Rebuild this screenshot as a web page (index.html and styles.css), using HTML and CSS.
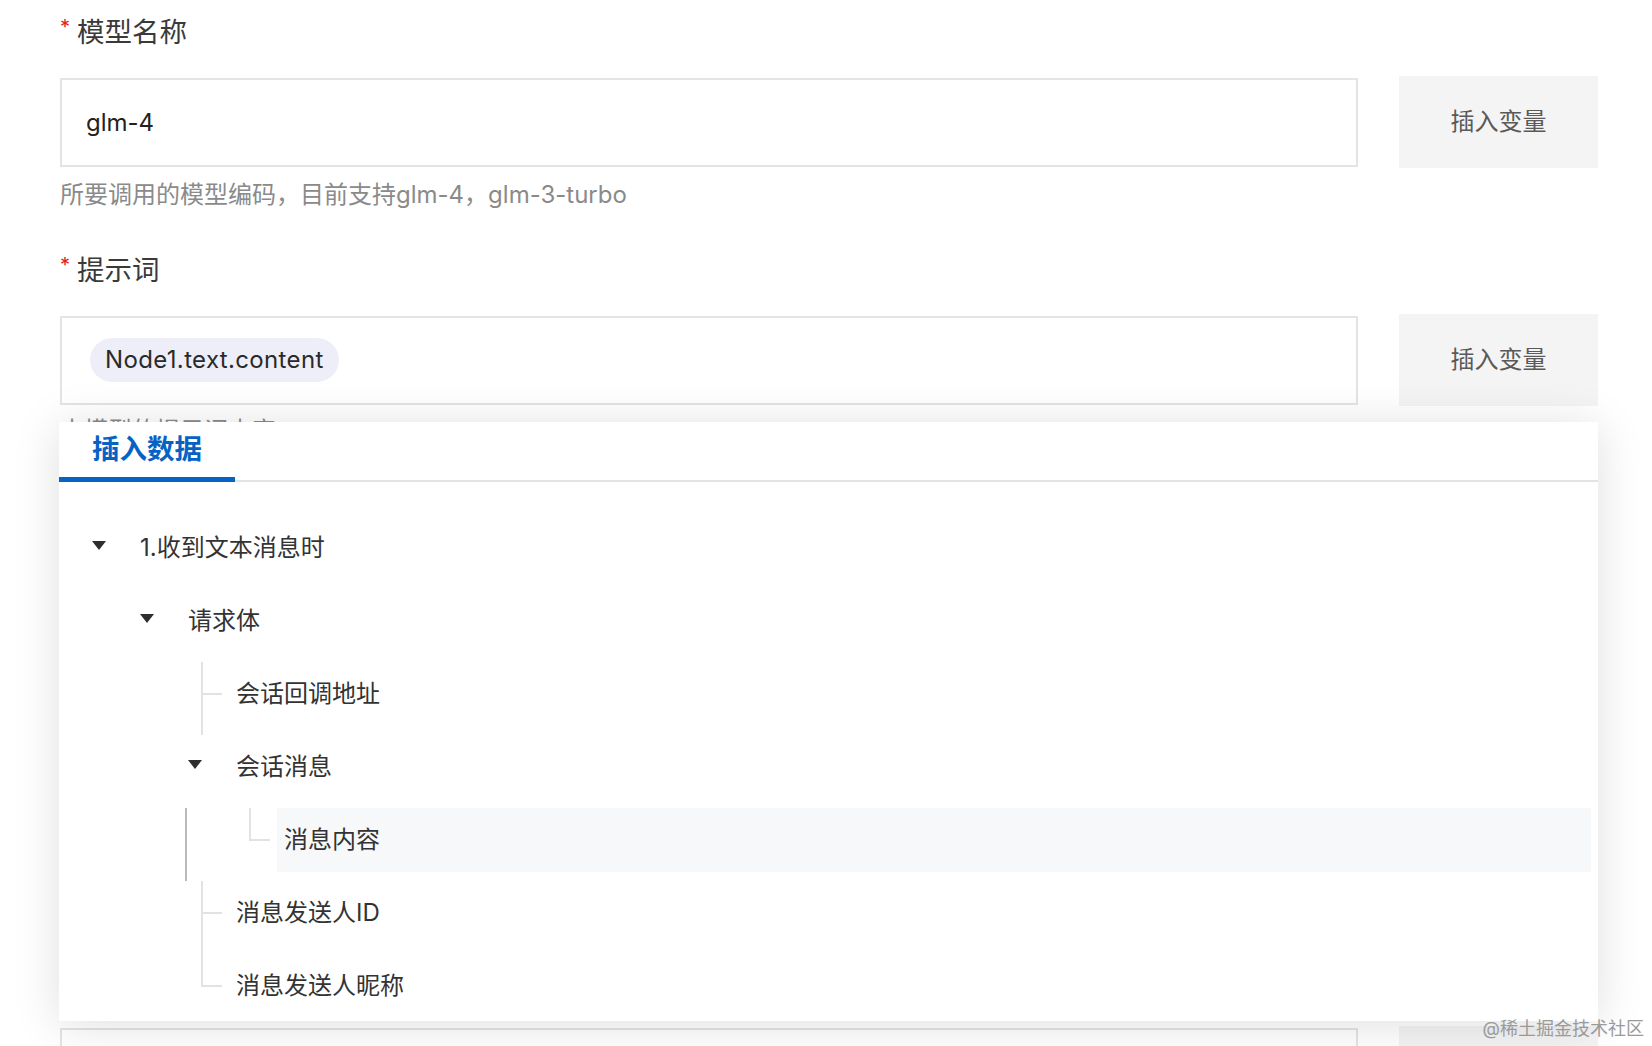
FILE: index.html
```html
<!DOCTYPE html>
<html lang="zh-CN">
<head>
<meta charset="utf-8">
<title>插入数据</title>
<link rel="stylesheet" href="styles.css">
</head>
<body>
<div class="page">
  <div class="field">
    <div class="label"><span class="req">*</span>模型名称</div>
    <div class="row">
      <div class="input"><span class="value">glm-4</span></div>
      <button class="btn">插入变量</button>
    </div>
    <div class="help">所要调用的模型编码，目前支持glm-4，glm-3-turbo</div>
  </div>

  <div class="field field-prompt">
    <div class="label"><span class="req">*</span>提示词</div>
    <div class="anchor">
      <div class="row">
        <div class="input"><span class="chip">Node1.text.content</span></div>
        <button class="btn">插入变量</button>
      </div>
      <div class="help help-covered">大模型的提示词内容</div>

      <div class="popup">
        <div class="tabs">
          <div class="tab">插入数据</div>
        </div>
        <div class="tree">
          <div class="node">
            <span class="switch"><i class="caret"></i></span>
            <span class="title">1.收到文本消息时</span>
          </div>
          <div class="node">
            <span class="indent"></span>
            <span class="switch"><i class="caret"></i></span>
            <span class="title">请求体</span>
          </div>
          <div class="node">
            <span class="indent"></span><span class="indent"></span>
            <span class="switch leaf"></span>
            <span class="title">会话回调地址</span>
          </div>
          <div class="node">
            <span class="indent"></span><span class="indent"></span>
            <span class="switch"><i class="caret"></i></span>
            <span class="title">会话消息</span>
          </div>
          <div class="node">
            <span class="indent"></span><span class="indent guide-dark"></span><span class="indent"></span>
            <span class="switch leaf last"></span>
            <span class="title selected">消息内容</span>
          </div>
          <div class="node">
            <span class="indent"></span><span class="indent"></span>
            <span class="switch leaf"></span>
            <span class="title">消息发送人ID</span>
          </div>
          <div class="node">
            <span class="indent"></span><span class="indent"></span>
            <span class="switch leaf last"></span>
            <span class="title">消息发送人昵称</span>
          </div>
        </div>
      </div>
    </div>
  </div>

  <div class="field field-next">
    <div class="row">
      <div class="input"></div>
      <button class="btn">插入变量</button>
    </div>
  </div>

  <div class="watermark">@稀土掘金技术社区</div>
</div>
</body>
</html>
```

FILE: styles.css
```css
html, body {
  margin: 0;
  padding: 0;
  height: 1046px;
  overflow: hidden;
  background: #ffffff;
}

.page {
  position: relative;
  height: 1046px;
  overflow: hidden;
  padding: 12px 54px 0 60px;
  box-sizing: border-box;
  font-family: Inter, "Noto Sans CJK SC", sans-serif;
  color: #333333;
}

.label {
  height: 40px;
  line-height: 40px;
  font-size: 27.5px;
  color: #3a3a3a;
  margin-bottom: 24px;
  display: flex;
  align-items: center;
}

.req {
  color: #e0201b;
  font-size: 20px;
  margin-right: 7px;
  align-self: flex-start;
  line-height: 30px;
}

.row {
  display: flex;
  align-items: center;
  gap: 41px;
  height: 92px;
}

.input {
  flex: 1;
  height: 89px;
  box-sizing: border-box;
  border: 2px solid #e4e4e4;
  background: #ffffff;
  display: flex;
  align-items: center;
  padding: 0 24px;
  font-size: 24px;
  color: #222222;
}

.btn {
  width: 199px;
  height: 92px;
  border: none;
  background: #f4f4f5;
  font-family: Inter, "Noto Sans CJK SC", sans-serif;
  font-size: 24px;
  line-height: 30px;
  color: #5a5a5a;
  padding: 0;
}

.chip {
  margin-left: 4px;
  height: 44px;
  line-height: 44px;
  padding: 0 15px;
  border-radius: 22px;
  background: #eeeef9;
  color: #2a2a2a;
  font-size: 24px;
  letter-spacing: 0.35px;
}

.help {
  margin-top: 10px;
  height: 34px;
  line-height: 34px;
  font-size: 24px;
  color: #8a8a8a;
}

.help-covered {
  margin-top: 8px;
}

.field-prompt {
  margin-top: 38px;
}

.field-next {
  margin-top: 578px;
}

.anchor {
  position: relative;
}

.popup {
  position: absolute;
  top: 108px;
  left: -1px;
  right: 0;
  height: 599px;
  overflow: hidden;
  background: #ffffff;
  box-shadow: 0 4px 44px rgba(0, 0, 0, 0.13);
  z-index: 2;
}

.tabs {
  display: flex;
  height: 60px;
  box-sizing: border-box;
  border-bottom: 2px solid #e3e3e3;
}

.tab {
  height: 60px;
  box-sizing: border-box;
  padding: 0 33px;
  line-height: 55px;
  border-bottom: 5px solid #0663c4;
  margin-bottom: -2px;
  font-size: 27.5px;
  font-weight: bold;
  color: #0663c4;
}

.tree {
  padding: 34px 7px 0 33px;
}

.node {
  display: flex;
  align-items: flex-start;
  height: 73px;
  font-size: 24px;
  color: #333333;
}

.indent {
  position: relative;
  width: 48px;
  height: 73px;
  flex: none;
}

.guide-dark::before {
  content: "";
  position: absolute;
  left: 45px;
  top: 0;
  width: 2px;
  height: 73px;
  background: #b9b9b9;
}

.switch {
  position: relative;
  width: 41px;
  height: 73px;
  flex: none;
  display: flex;
  align-items: flex-start;
  padding-top: 25px;
  box-sizing: border-box;
}

.caret {
  display: block;
  width: 0;
  height: 0;
  border-left: 7px solid transparent;
  border-right: 7px solid transparent;
  border-top: 9px solid #2e2e2e;
}

.leaf::before {
  content: "";
  position: absolute;
  left: 13px;
  top: 0;
  width: 2px;
  height: 73px;
  background: #e2e2e2;
}

.leaf.last::before {
  height: 33px;
}

.leaf::after {
  content: "";
  position: absolute;
  left: 13px;
  top: 31px;
  width: 21px;
  height: 2px;
  background: #e2e2e2;
}

.title {
  flex: 1;
  height: 64px;
  line-height: 64px;
  padding: 0 7px;
  white-space: nowrap;
}

.title.selected {
  background: #f7f8fa;
}

.watermark {
  position: absolute;
  right: 8px;
  bottom: 2px;
  font-size: 18px;
  line-height: 30px;
  color: #9a9a9a;
  z-index: 3;
}
```
